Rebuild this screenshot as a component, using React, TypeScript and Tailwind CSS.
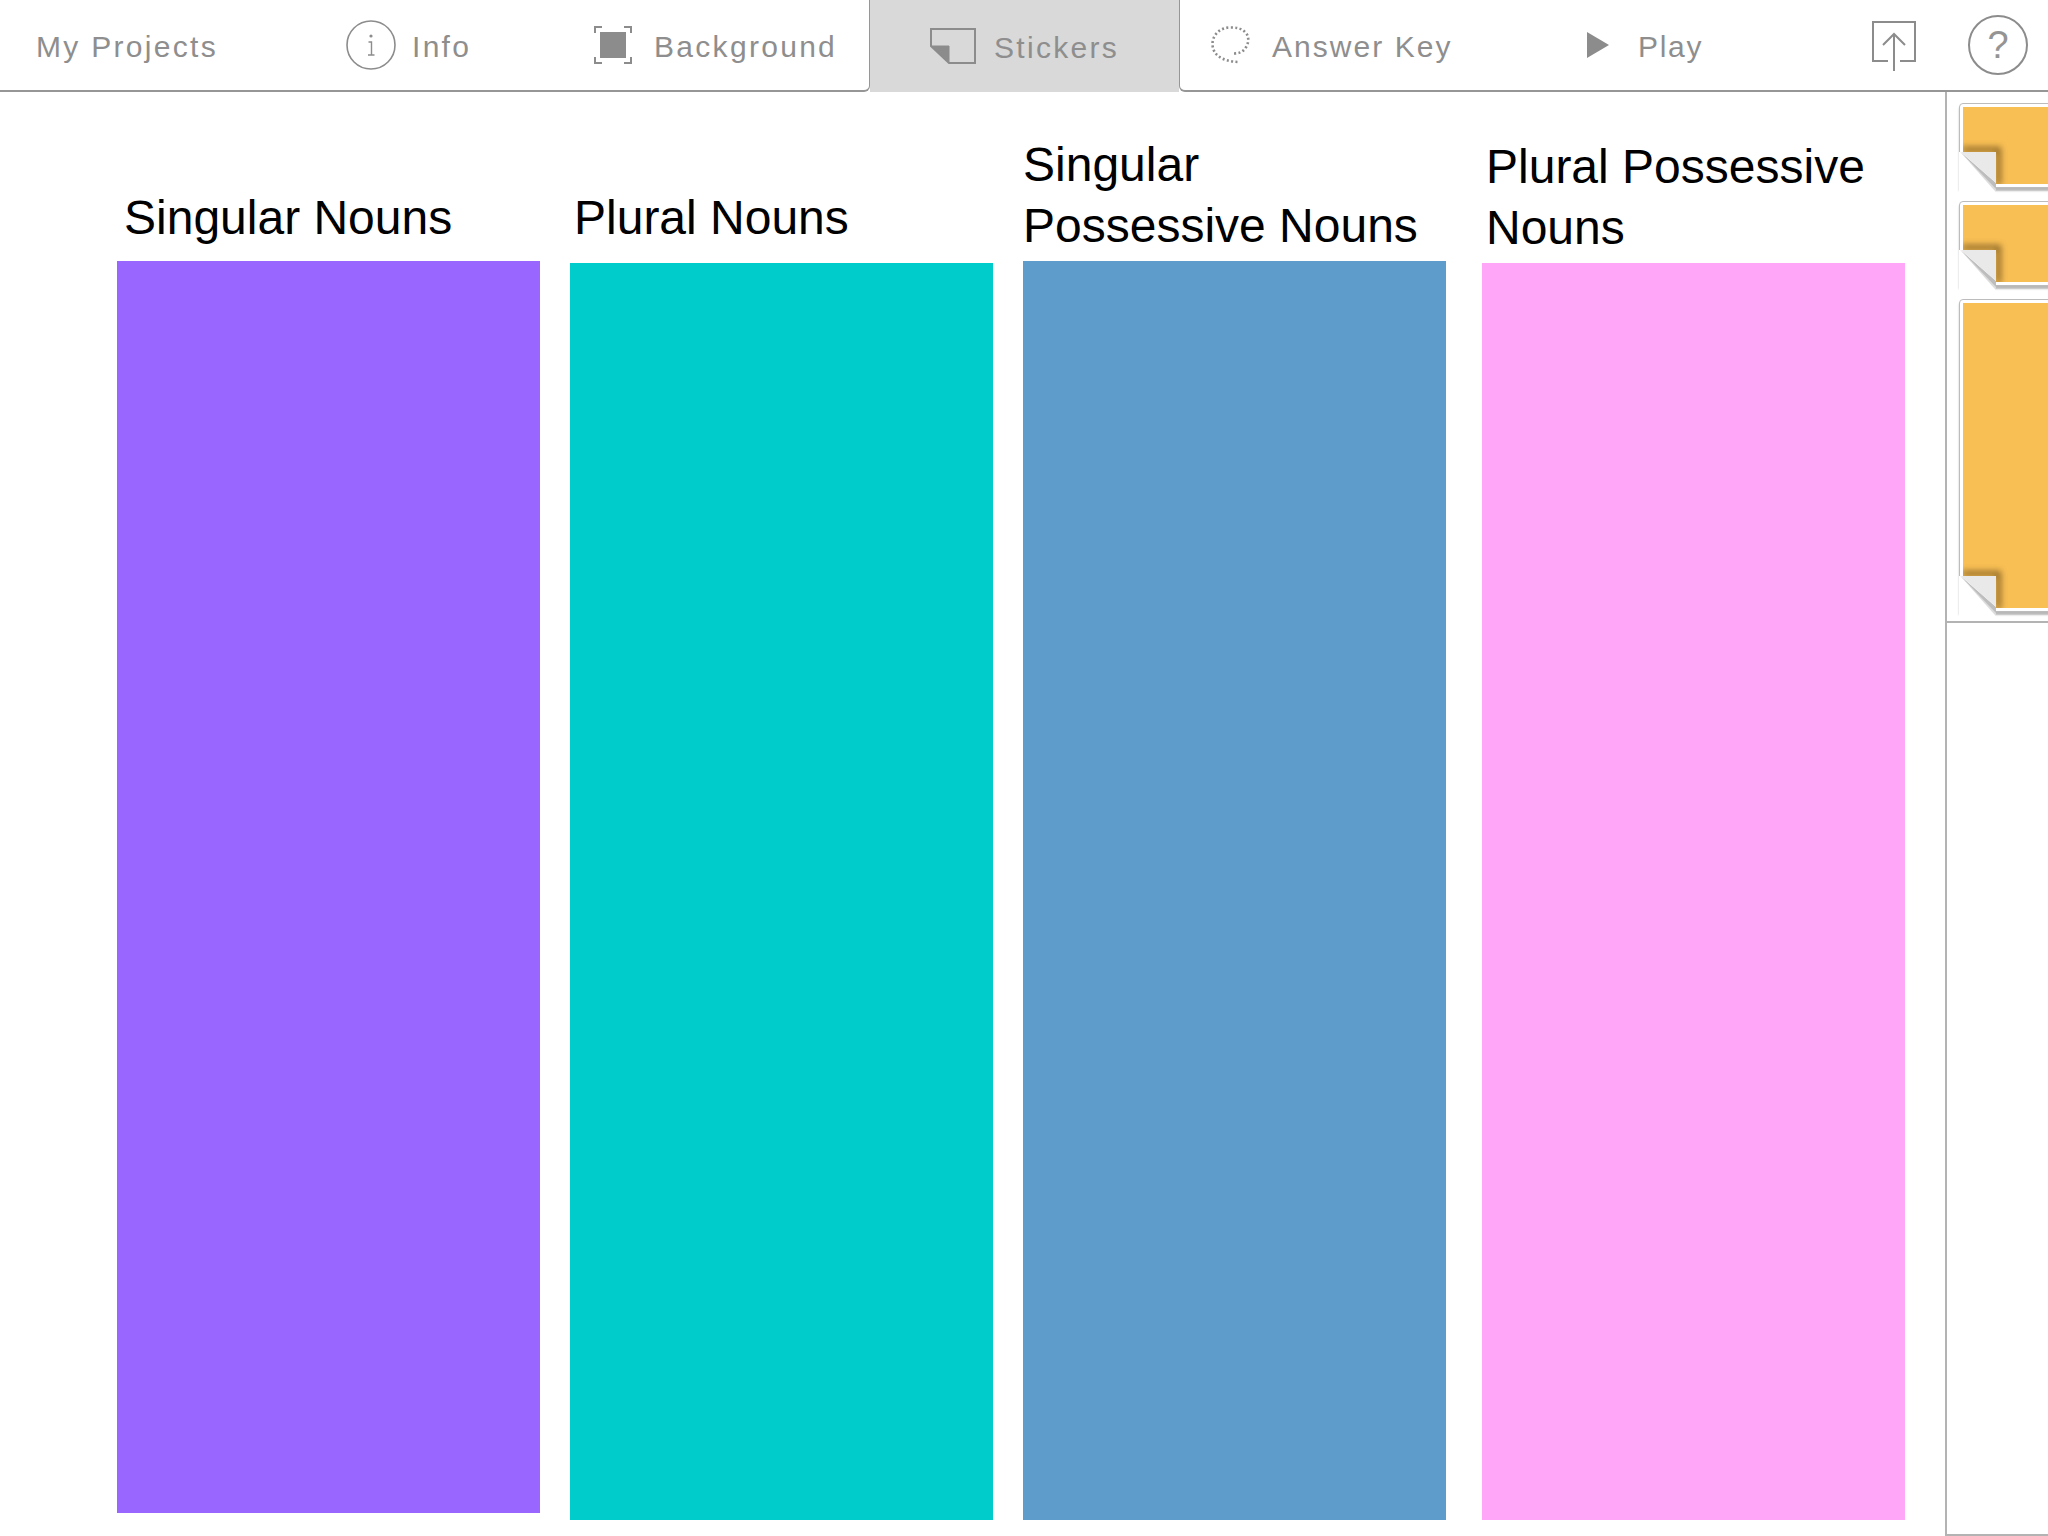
const navText = "mt-[2px] text-[30px] text-[#8e8e8e] whitespace-nowrap";

function InfoIcon() {
  return (
    <svg width="50" height="50" viewBox="0 0 50 50" className="shrink-0">
      <circle cx="25" cy="25" r="24" fill="none" stroke="#8c8c8c" strokeWidth="1.6" />
      <circle cx="25" cy="16" r="1.6" fill="#8c8c8c" />
      <path d="M22.5 22h3v13M22 35h6.5" fill="none" stroke="#8c8c8c" strokeWidth="1.4" />
    </svg>
  );
}

function BackgroundIcon() {
  return (
    <svg width="38" height="38" viewBox="0 0 38 38" className="shrink-0">
      <rect x="6" y="6" width="26" height="26" fill="#8c8c8c" />
      <path d="M1 7V1h7M30 1h7v6M1 31v6h7M37 31v6h-7" fill="none" stroke="#8c8c8c" strokeWidth="2" />
    </svg>
  );
}

function StickerIcon() {
  return (
    <svg width="46" height="36" viewBox="0 0 46 36" className="shrink-0">
      <path d="M1 1h44v34H19L1 18Z" fill="none" stroke="#8c8c8c" strokeWidth="2" />
      <path d="M1 18h18v17Z" fill="#8c8c8c" stroke="#8c8c8c" strokeWidth="1" />
    </svg>
  );
}

function AnswerIcon() {
  return (
    <svg width="40" height="38" viewBox="0 0 40 38" className="shrink-0">
      <path
        d="M23 27.500C28 27.500 32 26 34.500 22C38 17 38.500 10 34 6C30 2 25 1.500 19 1.500C9 1.500 1.500 9 1.500 18C1.500 28 10 35.500 28 36"
        fill="none"
        stroke="#8c8c8c"
        strokeWidth="2.6"
        strokeDasharray="2 2.4"
      />
    </svg>
  );
}

function PlayIcon() {
  return (
    <svg width="22" height="26" viewBox="0 0 22 26" className="shrink-0">
      <path d="M0 0L22 13L0 26Z" fill="#8c8c8c" />
    </svg>
  );
}

function ShareIcon() {
  return (
    <svg width="44" height="50" viewBox="0 0 44 50">
      <path d="M16 40H1V1h42v39H28" fill="none" stroke="#8c8c8c" strokeWidth="2" />
      <path d="M22 50V14M11 24L22 13L33 24" fill="none" stroke="#8c8c8c" strokeWidth="2" />
    </svg>
  );
}

function HelpIcon() {
  return (
    <div className="w-[60px] h-[60px] rounded-full border-2 border-[#8c8c8c] flex items-center justify-center text-[38px] text-[#949494] font-['Liberation_Sans',sans-serif]">
      ?
    </div>
  );
}

function StickerCurl() {
  return (
    <svg width="60" height="62" viewBox="0 0 60 62" className="absolute left-[-1px] bottom-[-9px]">
      <defs>
        <filter id="curlBlur" x="-30%" y="-30%" width="160%" height="160%">
          <feGaussianBlur stdDeviation="3" />
        </filter>
        <clipPath id="curlClip">
          <rect x="4" y="0" width="56" height="50" />
        </clipPath>
      </defs>
      <g clipPath="url(#curlClip)">
        <path d="M3 13H42V51H37V18H3Z" fill="#7a5a20" opacity="0.85" filter="url(#curlBlur)" />
      </g>
      <rect x="0" y="18" width="37" height="44" fill="#ffffff" />
      <path d="M0 16.500L37 54V58L35 56Z" fill="#dcdcdc" />
      <path d="M1 17.500L37 49V55Z" fill="#bdbdbd" />
      <path d="M2 18H37V49Z" fill="#e9e9e9" />
    </svg>
  );
}

function Sticker({ heightClass }: { heightClass: string }) {
  return (
    <div className={`relative ${heightClass} w-[200px] bg-white border border-[#bcbcbc] rounded-tl-[4px] pt-[3px] pl-[3px] pb-[3px] shadow-[0_3px_2px_rgba(0,0,0,0.28)]`}>
      <div className="h-full bg-[#f8bf55]" />
      <StickerCurl />
    </div>
  );
}

function Column({
  lines,
  headerClass,
  textClass,
  barClass,
  columnClass,
}: {
  lines: string[];
  headerClass: string;
  textClass: string;
  barClass: string;
  columnClass: string;
}) {
  return (
    <div className={`flex flex-col w-[423px] shrink-0 ${columnClass}`}>
      <div className={`flex flex-col justify-end ${headerClass} ${textClass} text-[48px] leading-[61px] text-black font-['Liberation_Sans',Arial,sans-serif]`}>
        {lines.map((l) => (
          <div key={l} className="whitespace-nowrap">{l}</div>
        ))}
      </div>
      <div className={barClass} />
    </div>
  );
}

export default function App() {
  return (
    <div className="w-[2048px] h-[1536px] overflow-hidden bg-white flex flex-col font-['Liberation_Sans',Arial,sans-serif]">
      <nav className="h-[92px] flex shrink-0">
        <div className="w-[870px] flex border-b-2 border-r border-[#969696] rounded-br-[6px]">
          <div className="w-[323px] flex items-center pl-[36px]">
            <span className={`${navText} tracking-[2.3px]`}>My Projects</span>
          </div>
          <div className="w-[248px] flex items-center pl-[23px] gap-[16px]">
            <InfoIcon />
            <span className={`${navText} tracking-[2.3px]`}>Info</span>
          </div>
          <div className="flex items-center pl-[23px] gap-[22px]">
            <BackgroundIcon />
            <span className={`${navText} tracking-[2.3px]`}>Background</span>
          </div>
        </div>
        <div className="w-[309px] flex items-center pl-[60px] gap-[18px] bg-[#d9d9d9]">
          <StickerIcon />
          <span className={`${navText} tracking-[2.3px]`}>Stickers</span>
        </div>
        <div className="flex-1 flex border-b-2 border-l border-[#969696] rounded-bl-[6px]">
          <div className="w-[360px] flex items-center pl-[31px] gap-[21px]">
            <AnswerIcon />
            <span className={`${navText} tracking-[2.05px]`}>Answer Key</span>
          </div>
          <div className="w-[332px] flex items-center pl-[47px] gap-[29px]">
            <PlayIcon />
            <span className={`${navText} tracking-[1.7px]`}>Play</span>
          </div>
          <div className="w-[96px] flex items-center pt-[2px]">
            <ShareIcon />
          </div>
          <div className="flex items-center">
            <HelpIcon />
          </div>
        </div>
      </nav>
      <div className="flex-1 flex min-h-0">
        <main className="w-[1945px] flex pl-[117px]">
          <Column
            lines={["Singular Nouns"]}
            headerClass="h-[169px] pb-[13px]"
            textClass="pl-[7px]"
            barClass="h-[1252px] bg-[#9966ff]"
            columnClass=""
          />
          <Column
            lines={["Plural Nouns"]}
            headerClass="h-[171px] pb-[15px]"
            textClass="pl-[4px]"
            barClass="h-[1257px] bg-[#00cccc]"
            columnClass="ml-[30px]"
          />
          <Column
            lines={["Singular", "Possessive Nouns"]}
            headerClass="h-[169px] pb-[5px]"
            textClass="pl-[0px]"
            barClass="h-[1259px] bg-[#5d9ccb]"
            columnClass="ml-[30px]"
          />
          <Column
            lines={["Plural Possessive", "Nouns"]}
            headerClass="h-[171px] pb-[5px]"
            textClass="pl-[4px]"
            barClass="h-[1257px] bg-[#ffa6f9]"
            columnClass="ml-[36px]"
          />
        </main>
        <aside className="flex-1 border-l-2 border-[#b3b3b3] border-b-2 overflow-hidden">
          <div className="h-[531px] border-b-2 border-[#b3b3b3] pt-[11px] pl-[12px] flex flex-col gap-[13px]">
            <Sticker heightClass="h-[85px]" />
            <Sticker heightClass="h-[85px]" />
            <Sticker heightClass="h-[313px]" />
          </div>
        </aside>
      </div>
    </div>
  );
}
